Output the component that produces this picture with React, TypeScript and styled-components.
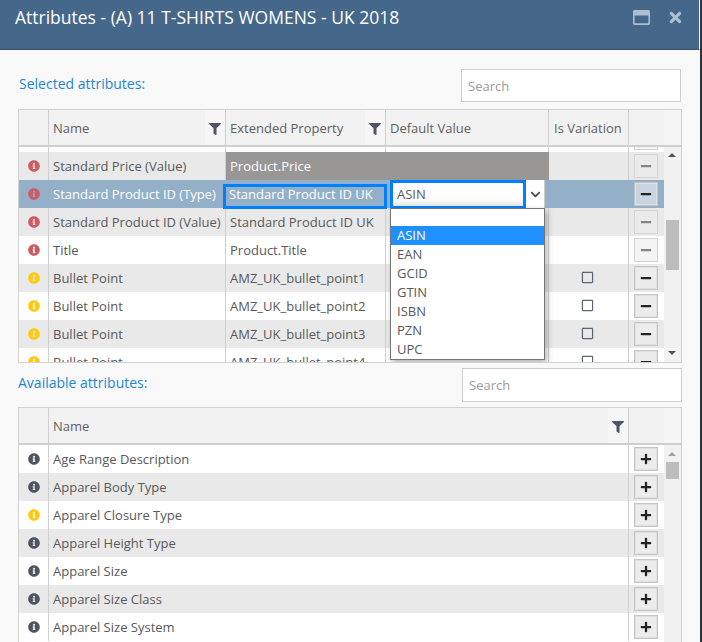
import React from 'react';
import styled, { createGlobalStyle } from 'styled-components';
import { FaInfoCircle, FaFilter, FaTimes, FaMinus, FaPlus, FaRegSquare, FaChevronDown, FaRegWindowMaximize } from 'react-icons/fa';

const Global = createGlobalStyle`
  html, body { margin: 0; padding: 0; background: #30343a; }
  body { font-family: "Open Sans", "Liberation Sans", sans-serif; font-size: 13px; color: #58595b; overflow: hidden; }
  * { box-sizing: border-box; }
`;

const Modal = styled.div`
  width: 700px;
  height: 642px;
  display: flex;
  flex-direction: column;
  overflow: hidden;
  background: #f9f9f9;
`;

const Header = styled.header`
  height: 50px;
  flex: none;
  background: #45678a;
  border-bottom: 1px solid #34506e;
  border-right: 1px solid #f2f4f6;
  padding: 5px 15px 0 15px;
  display: flex;
  align-items: flex-start;
  justify-content: space-between;
  color: #fff;
`;

const Title = styled.h1`
  margin: 0;
  font-size: 17.5px;
  font-weight: 400;
  line-height: 25px;
  color: #fff;
`;

const HeaderTools = styled.div`
  display: flex;
  align-items: center;
  gap: 17px;
  height: 25px;
  color: #aebfd0;
`;

const Body = styled.main`
  flex: 1;
  min-height: 0;
  padding: 19px 18px 0 18px;
  display: flex;
  flex-direction: column;
`;

const Toolbar = styled.div<{ $first?: boolean }>`
  display: flex;
  align-items: center;
  justify-content: space-between;
  height: ${p => (p.$first ? 33 : 34)}px;
  flex: none;
  margin-top: ${p => (p.$first ? 0 : 5)}px;
  margin-bottom: ${p => (p.$first ? 7 : 5)}px;
  padding: ${p => (p.$first ? '0 1px 0 1px' : '0')};
`;

const SectionLabel = styled.span`
  font-size: 14px;
  color: #1f86d3;
  margin-top: -5px;
`;

const SearchInput = styled.input`
  width: 220px;
  height: 100%;
  border: 1px solid #cfcfcf;
  background: #fff;
  padding: 0 6px;
  font: inherit;
  outline: none;
  &::placeholder { color: #9b9b9b; opacity: 1; }
`;

const Panel = styled.section<{ $height: number }>`
  height: ${p => p.$height}px;
  flex: none;
  border: 1px solid #d2d2d2;
  display: flex;
  flex-direction: column;
  overflow: hidden;
  background: #f1f1f1;
`;

const HeadRow = styled.div<{ $cols: string }>`
  display: grid;
  grid-template-columns: ${p => p.$cols} 17px;
  height: 37px;
  flex: none;
  background: #f2f2f2;
  border-bottom: 2px solid #cfcfcf;
`;

const HeadCell = styled.div<{ $plain?: boolean; $pad?: number }>`
  display: flex;
  align-items: center;
  justify-content: space-between;
  padding-left: ${p => p.$pad ?? 4}px;
  border-right: ${p => (p.$plain ? 'none' : '1px solid #cfcfcf')};
  color: #5f6062;
  white-space: nowrap;
  min-width: 0;
`;

const ScrollHead = styled.div`
  background: #f5f5f5;
`;

const FilterBox = styled.span`
  height: 100%;
  width: 20px;
  flex: none;
  display: flex;
  align-items: center;
  justify-content: center;
  padding-top: 3px;
  background: #f6f6f6;
  color: #4f5560;
  font-size: 12px;
`;

const Content = styled.div`
  flex: 1;
  min-height: 0;
  display: flex;
`;

const Rows = styled.div<{ $start?: number }>`
  flex: 1;
  min-width: 0;
  overflow: hidden;
  background: #fff;
  & > :first-child { margin-top: ${p => p.$start ?? 0}px; }
`;

const Row = styled.div<{ $cols: string; $shade?: boolean; $active?: boolean }>`
  display: grid;
  grid-template-columns: ${p => p.$cols};
  height: 28px;
  position: relative;
  z-index: ${p => (p.$active ? 2 : 'auto')};
  background: ${p => (p.$active ? '#93b0c8' : p.$shade ? '#e9e9e9' : '#fff')};
  color: ${p => (p.$active ? '#fff' : '#58595b')};
`;

const Cell = styled.div<{ $dark?: boolean; $noLine?: boolean; $center?: boolean }>`
  position: relative;
  display: flex;
  align-items: center;
  justify-content: ${p => (p.$center ? 'center' : 'flex-start')};
  padding-left: ${p => (p.$center ? 0 : 4)}px;
  white-space: nowrap;
  min-width: 0;
  background: ${p => (p.$dark ? '#999696' : 'transparent')};
  color: ${p => (p.$dark ? '#fff' : 'inherit')};
  border-right: ${p => (p.$noLine || p.$dark ? 'none' : '1px solid #cfcfcf')};
`;

const InfoIcon = styled(FaInfoCircle)<{ $tone: string }>`
  font-size: 12px;
  color: ${p => p.$tone};
`;

const ActionButton = styled.button<{ $disabled?: boolean; $active?: boolean }>`
  width: 24px;
  height: 24px;
  padding: 0;
  margin-left: -1px;
  display: flex;
  align-items: center;
  justify-content: center;
  border: 1px solid ${p => (p.$disabled ? '#d4d4d4' : '#c4c4c4')};
  box-shadow: inset 0 0 0 1px ${p => (p.$disabled ? 'transparent' : '#e0e0e0')};
  background: ${p => (p.$active ? '#c8d4df' : p.$disabled ? 'rgba(236, 236, 236, 0.6)' : '#ececec')};
  color: ${p => (p.$disabled ? '#858585' : '#222')};
  font-size: 12px;
`;

const Check = styled(FaRegSquare)`
  font-size: 13px;
  margin: 0 2px 2px 0;
  color: #5c6775;
`;

const FocusBox = styled.div`
  position: absolute;
  left: -3px;
  top: 4px;
  width: 164px;
  height: 25px;
  border: 3px solid #0080ff;
  padding: 0 0 6px 3px;
  display: flex;
  align-items: center;
  color: #fff;
`;

const SelectWrap = styled.div`
  position: absolute;
  left: 4px;
  top: 0;
  width: 155px;
  height: 29px;
  display: flex;
  background: #fff;
`;

const SelectValue = styled.div`
  width: 136px;
  height: 29px;
  border: 3px solid #0080ff;
  padding: 0 0 2px 4px;
  display: flex;
  align-items: center;
  color: #58595b;
  background: linear-gradient(#fff 70%, #e6e6e6);
`;

const SelectArrow = styled.div`
  flex: 1;
  display: flex;
  align-items: center;
  justify-content: center;
  height: 28px;
  color: #4a4a4a;
  font-size: 11px;
  border-right: 1px solid #ccc;
`;

const Dropdown = styled.ul`
  position: absolute;
  left: 4px;
  top: 28px;
  width: 155px;
  margin: 0;
  padding: 0;
  list-style: none;
  background: #fff;
  border: 1px solid #767676;
  box-shadow: 2px 3px 6px rgba(0, 0, 0, 0.3);
`;

const Option = styled.li<{ $on?: boolean; $blank?: boolean }>`
  height: ${p => (p.$blank ? 17 : 19)}px;
  line-height: 19px;
  padding-left: 6px;
  background: ${p => (p.$on ? '#1e90ff' : 'transparent')};
  color: ${p => (p.$on ? '#fff' : '#58595b')};
`;

const Scrollbar = styled.div`
  width: 17px;
  flex: none;
  background: #f1f1f1;
  position: relative;
`;

const Arrow = styled.span<{ $down?: boolean; $muted?: boolean; $top: number }>`
  width: 0;
  height: 0;
  position: absolute;
  left: 4px;
  top: ${p => p.$top}px;
  border-left: 4px solid transparent;
  border-right: 4px solid transparent;
  ${p => (p.$down ? 'border-top' : 'border-bottom')}: 4px solid ${p => (p.$muted ? '#a3a3a3' : '#505050')};
`;

const Thumb = styled.span<{ $top: number; $height: number }>`
  position: absolute;
  left: 2px;
  top: ${p => p.$top}px;
  width: 13px;
  height: ${p => p.$height}px;
  background: #bdbdbd;
`;

const topCols = '30px 177px 160px 163px 80px 35px';
const bottomCols = '30px 580px 35px';

const RED = '#cf5a5f';
const YEL = '#ffc90e';
const GRY = '#4f5560';

const topRows = [
  { name: 'Title', prop: 'Product.Title', tone: RED, disabled: true },
  { name: 'Bullet Point', prop: 'AMZ_UK_bullet_point1', tone: YEL, check: true, shade: true },
  { name: 'Bullet Point', prop: 'AMZ_UK_bullet_point2', tone: YEL, check: true },
  { name: 'Bullet Point', prop: 'AMZ_UK_bullet_point3', tone: YEL, check: true, shade: true },
  { name: 'Bullet Point', prop: 'AMZ_UK_bullet_point4', tone: YEL, check: true },
];

const available = [
  { name: 'Age Range Description', tone: GRY },
  { name: 'Apparel Body Type', tone: GRY },
  { name: 'Apparel Closure Type', tone: YEL },
  { name: 'Apparel Height Type', tone: GRY },
  { name: 'Apparel Size', tone: GRY },
  { name: 'Apparel Size Class', tone: GRY },
  { name: 'Apparel Size System', tone: GRY },
];

const options = ['ASIN', 'EAN', 'GCID', 'GTIN', 'ISBN', 'PZN', 'UPC'];

export default function App() {
  return (
    <Modal>
      <Global />
      <Header>
        <Title>Attributes - (A) 11 T-SHIRTS WOMENS - UK 2018</Title>
        <HeaderTools>
          <FaRegWindowMaximize size={17} />
          <FaTimes size={17} />
        </HeaderTools>
      </Header>
      <Body>
        <Toolbar $first>
          <SectionLabel>Selected attributes:</SectionLabel>
          <SearchInput placeholder="Search" />
        </Toolbar>
        <Panel $height={254}>
          <HeadRow $cols={topCols}>
            <HeadCell />
            <HeadCell>Name<FilterBox><FaFilter /></FilterBox></HeadCell>
            <HeadCell>Extended Property<FilterBox><FaFilter /></FilterBox></HeadCell>
            <HeadCell>Default Value</HeadCell>
            <HeadCell $pad={5}>Is Variation</HeadCell>
            <HeadCell $plain />
            <ScrollHead />
          </HeadRow>
          <Content>
            <Rows $start={-23}>
              <Row $cols={topCols}>
                <Cell />
                <Cell />
                <Cell />
                <Cell />
                <Cell />
                <Cell $center $noLine><ActionButton $disabled><FaMinus /></ActionButton></Cell>
              </Row>
              <Row $cols={topCols} $shade>
                <Cell $center><InfoIcon $tone={RED} /></Cell>
                <Cell>Standard Price (Value)</Cell>
                <Cell $dark>Product.Price</Cell>
                <Cell $dark />
                <Cell />
                <Cell $center $noLine><ActionButton $disabled><FaMinus /></ActionButton></Cell>
              </Row>
              <Row $cols={topCols} $active>
                <Cell $center $noLine><InfoIcon $tone={RED} /></Cell>
                <Cell $noLine>Standard Product ID (Type)</Cell>
                <Cell $noLine><FocusBox>Standard Product ID UK</FocusBox></Cell>
                <Cell $noLine>
                  <SelectWrap>
                    <SelectValue>ASIN</SelectValue>
                    <SelectArrow><FaChevronDown /></SelectArrow>
                  </SelectWrap>
                  <Dropdown>
                    <Option $blank />
                    {options.map((o, i) => <Option key={o} $on={i === 0}>{o}</Option>)}
                  </Dropdown>
                </Cell>
                <Cell $noLine />
                <Cell $center $noLine><ActionButton $active><FaMinus /></ActionButton></Cell>
              </Row>
              <Row $cols={topCols} $shade>
                <Cell $center><InfoIcon $tone={RED} /></Cell>
                <Cell>Standard Product ID (Value)</Cell>
                <Cell>Standard Product ID UK</Cell>
                <Cell />
                <Cell />
                <Cell $center $noLine><ActionButton $disabled><FaMinus /></ActionButton></Cell>
              </Row>
              {topRows.map((r, i) => (
                <Row key={i} $cols={topCols} $shade={r.shade}>
                  <Cell $center><InfoIcon $tone={r.tone} /></Cell>
                  <Cell>{r.name}</Cell>
                  <Cell>{r.prop}</Cell>
                  <Cell />
                  <Cell $center>{r.check && <Check />}</Cell>
                  <Cell $center $noLine><ActionButton $disabled={r.disabled}><FaMinus /></ActionButton></Cell>
                </Row>
              ))}
            </Rows>
            <Scrollbar>
              <Arrow $top={6} />
              <Thumb $top={73} $height={50} />
              <Arrow $down $top={204} />
            </Scrollbar>
          </Content>
        </Panel>
        <Toolbar>
          <SectionLabel>Available attributes:</SectionLabel>
          <SearchInput placeholder="Search" />
        </Toolbar>
        <Panel $height={260}>
          <HeadRow $cols={bottomCols}>
            <HeadCell />
            <HeadCell>Name<FilterBox><FaFilter /></FilterBox></HeadCell>
            <HeadCell $plain />
            <ScrollHead />
          </HeadRow>
          <Content>
            <Rows>
              {available.map((r, i) => (
                <Row key={r.name} $cols={bottomCols} $shade={i % 2 === 1}>
                  <Cell $center><InfoIcon $tone={r.tone} /></Cell>
                  <Cell>{r.name}</Cell>
                  <Cell $center $noLine><ActionButton><FaPlus /></ActionButton></Cell>
                </Row>
              ))}
            </Rows>
            <Scrollbar>
              <Arrow $muted $top={7} />
              <Thumb $top={17} $height={17} />
            </Scrollbar>
          </Content>
        </Panel>
      </Body>
    </Modal>
  );
}
